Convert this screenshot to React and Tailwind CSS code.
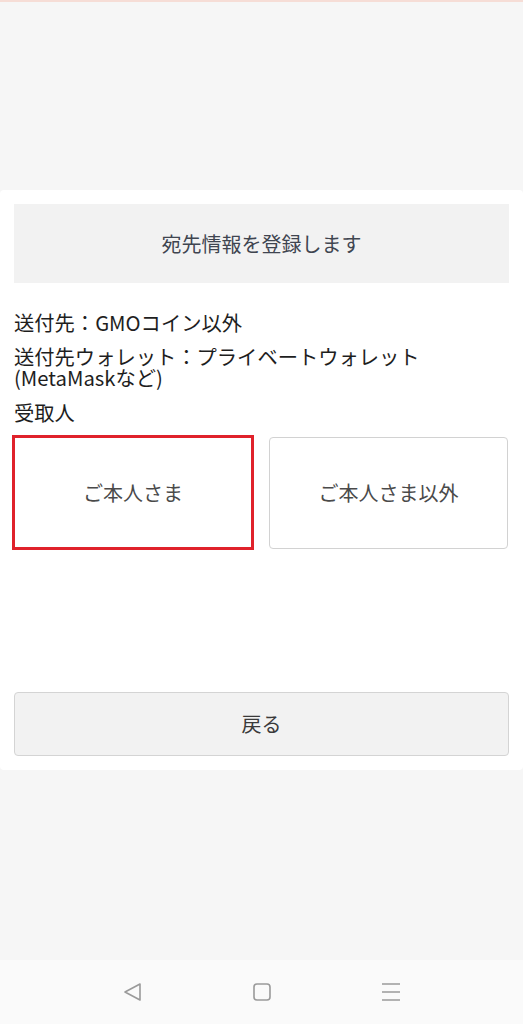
import React from 'react';

const font = { fontFamily: '"Noto Sans CJK JP", "Noto Sans", sans-serif' };

function NavBar() {
  return (
    <div className="flex h-[64px] items-center justify-center gap-[110px] bg-[#fafafa]">
      <svg width="20" height="20" viewBox="0 0 20 20" fill="none" stroke="#9a9a9a" strokeWidth="1.6" strokeLinejoin="round">
        <path d="M17 2 L2 10 L17 18 Z" />
      </svg>
      <svg width="18" height="18" viewBox="0 0 18 18" fill="none" stroke="#9a9a9a" strokeWidth="1.6">
        <rect x="1" y="1" width="16" height="16" rx="3" />
      </svg>
      <svg width="20" height="18" viewBox="0 0 20 18" fill="none" stroke="#9a9a9a" strokeWidth="1.6">
        <path d="M1 1 H19 M1 9 H19 M1 17 H19" />
      </svg>
    </div>
  );
}

export default function App() {
  return (
    <div className="flex h-[1024px] w-[523px] flex-col bg-[#f6f6f6]" style={font}>
      <div className="h-[2px] bg-[#f6ddd6]" />
      <div className="h-[188px]" />

      <div className="rounded-[4px] bg-white px-[14px] pt-[14px] pb-[14px]">
        <div className="flex h-[79px] items-center justify-center bg-[#f2f2f2] text-[20px] text-[#3f4550]">
          宛先情報を登録します
        </div>

        <div className="mt-[29px] flex flex-col text-[20.3px] leading-[21px] text-[#1e1e1e]">
          <p>送付先：GMOコイン以外</p>
          <p className="mt-[13px]">
            送付先ウォレット：プライベートウォレット
            <br />
            (MetaMaskなど)
          </p>
          <p className="mt-[14px]">受取人</p>
        </div>

        <div className="mt-[12px] flex items-center gap-[15px]">
          <button className="-ml-[2px] flex h-[115px] w-[242px] items-center justify-center border-[3px] border-[#e0222b] bg-white text-[20px] text-[#4a4a4a]">
            ご本人さま
          </button>
          <button className="flex h-[112px] w-[239px] items-center justify-center rounded-[4px] border border-[#d2d2d2] bg-white text-[20px] text-[#4a4a4a]">
            ご本人さま以外
          </button>
        </div>

        <button className="mt-[142px] flex h-[64px] w-full items-center justify-center rounded-[4px] border border-[#d4d4d4] bg-[#f2f2f2] text-[20px] text-[#3a3a3a]">
          戻る
        </button>
      </div>

      <div className="flex-1" />
      <NavBar />
    </div>
  );
}
